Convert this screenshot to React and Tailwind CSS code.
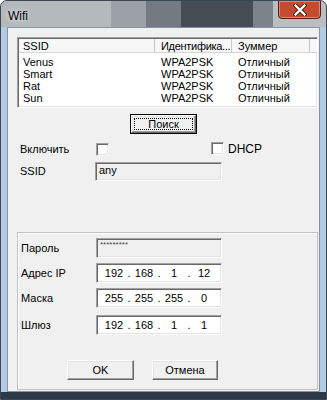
const sunken =
  "border border-t-[#a0a0a0] border-l-[#a0a0a0] border-r-white border-b-white shadow-[inset_1px_1px_0_#696969,inset_-1px_-1px_0_#e3e3e3]";
const raised =
  "border border-t-white border-l-white border-r-[#696969] border-b-[#696969] shadow-[inset_-1px_-1px_0_#a0a0a0,inset_1px_1px_0_#e3e3e3] bg-[#f0f0f0]";

const networks = [
  { ssid: "Venus", auth: "WPA2PSK", signal: "Отличный" },
  { ssid: "Smart", auth: "WPA2PSK", signal: "Отличный" },
  { ssid: "Rat", auth: "WPA2PSK", signal: "Отличный" },
  { ssid: "Sun", auth: "WPA2PSK", signal: "Отличный" },
];

function Checkbox() {
  return <div className={`w-[13px] h-[13px] bg-white ${sunken}`} />;
}

function IpField({ parts }) {
  return (
    <div className={`w-[126px] h-[20px] bg-white flex items-center pl-[5px] text-[11px] ${sunken}`}>
      {parts.map((p, i) => (
        <div key={i} className="flex">
          <span className="w-[24px] text-center">{p}</span>
          {i < 3 && <span className="w-[6px] text-center">.</span>}
        </div>
      ))}
    </div>
  );
}

function FormRow({ label, mt, children }) {
  return (
    <div className={`flex items-center pl-[3px] ${mt}`}>
      <span className="w-[75px]">{label}</span>
      {children}
    </div>
  );
}

export default function App() {
  return (
    <div className="w-[327px] h-[400px] flex flex-col overflow-hidden rounded-t-[7px] border border-[#3a4654] bg-[#b3cbe3] font-['Liberation_Sans',Arial,sans-serif] text-[11px] text-black">
      {/* title bar */}
      <div className="h-[26px] flex items-start bg-[#5b626a]">
        <div className="w-[110px] h-full bg-[#b4b9be] flex items-start">
          <span className="ml-[7px] mt-[6px] text-[12px] [text-shadow:0_0_5px_rgba(255,255,255,0.95)]">Wifi</span>
        </div>
        <div className="w-[35px] h-full bg-[#9ba1a7]" />
        <div className="w-[35px] h-full bg-[#737a81]" />
        <div className="flex-1 h-full bg-[#454c54]" />
        <div className="w-[20px] h-full bg-[#7d838a]" />
        <div className="w-[53px] h-full bg-[#b9bec3] flex justify-end">
          <div className="mr-[5px] -mt-px w-[43px] h-[19px] rounded-b-[4px] border border-[#5a1b12] bg-[#c44a30] shadow-[inset_0_0_0_1px_rgba(255,255,255,0.35)] flex items-center justify-center">
            <svg width="14" height="12" viewBox="0 0 14 12">
              <path d="M2.5 1.5 L11.5 10.5 M11.5 1.5 L2.5 10.5" stroke="#4a1a12" strokeWidth="4.2" strokeLinecap="square" />
              <path d="M2.5 1.5 L11.5 10.5 M11.5 1.5 L2.5 10.5" stroke="#ffffff" strokeWidth="2.4" strokeLinecap="square" />
            </svg>
          </div>
        </div>
      </div>

      {/* client area */}
      <div className="flex-1 flex flex-col px-[6px]">
        <div className="flex-1 flex flex-col bg-[#f0f0f0] border border-[#8394a6]">
          {/* network list */}
          <div className={`ml-[9px] mt-[9px] w-[301px] h-[71px] bg-white ${sunken}`}>
            <div className="flex h-[14px] leading-[14px] bg-[#f7f7f7] border-b border-[#d5d5d5] mt-px ml-px">
              <div className="w-[136px] pl-[4px] border-r border-[#c8c8c8]">SSID</div>
              <div className="w-[77px] pl-[6px] border-r border-[#c8c8c8] whitespace-nowrap overflow-hidden tracking-[-0.3px]">Идентифика...</div>
              <div className="w-[78px] pl-[6px] border-r border-[#c8c8c8]">Зуммер</div>
              <div className="flex-1" />
            </div>
            <div className="mt-[3px] ml-px">
              {networks.map((n) => (
                <div key={n.ssid} className="flex h-[12px] leading-[12px]">
                  <span className="w-[136px] pl-[4px]">{n.ssid}</span>
                  <span className="w-[77px] pl-[6px]">{n.auth}</span>
                  <span className="w-[78px] pl-[6px]">{n.signal}</span>
                </div>
              ))}
            </div>
          </div>

          {/* search */}
          <div className="mt-[6px] mx-auto w-[67px] h-[20px] border border-black">
            <div className={`h-full flex p-[2px] ${raised}`}>
              <div className="flex-1 flex items-center justify-center border border-dotted border-black">Поиск</div>
            </div>
          </div>

          <div className="mt-[9px] h-[13px] flex items-center pl-[12px]">
            <span className="w-[76px]">Включить</span>
            <Checkbox />
            <div className="ml-[102px] -mt-[2px] flex items-center gap-[4px]">
              <Checkbox />
              <span className="text-[12px]">DHCP</span>
            </div>
          </div>

          <div className="mt-[6px] flex items-center pl-[12px]">
            <span className="w-[75px]">SSID</span>
            <div className={`w-[127px] h-[19px] pl-[3px] pt-[1px] leading-[12px] ${sunken}`}>any</div>
          </div>

          {/* address settings */}
          <div className="mt-[51px] ml-[9px] mb-px w-[301px] flex-1 border border-[#c2c2c2] shadow-[inset_1px_1px_0_#ffffff]">
            <FormRow label="Пароль" mt="mt-[5px]">
              <div className={`w-[126px] h-[20px] pl-[3px] pt-[2px] text-[8px] leading-[8px] text-[#444] ${sunken}`}>*********</div>
            </FormRow>
            <FormRow label="Адрес IP" mt="mt-[5px]">
              <IpField parts={["192", "168", "1", "12"]} />
            </FormRow>
            <FormRow label="Маска" mt="mt-[5px]">
              <IpField parts={["255", "255", "255", "0"]} />
            </FormRow>
            <FormRow label="Шлюз" mt="mt-[7px]">
              <IpField parts={["192", "168", "1", "1"]} />
            </FormRow>

            <div className="mt-[25px] ml-[49px] flex gap-[18px]">
              <div className={`w-[67px] h-[20px] flex items-center justify-center ${raised}`}>OK</div>
              <div className={`w-[66px] h-[20px] flex items-center justify-center ${raised}`}>Отмена</div>
            </div>
          </div>
        </div>
      </div>
      <div className="h-[7px] bg-[#2c3a48]" />
    </div>
  );
}
